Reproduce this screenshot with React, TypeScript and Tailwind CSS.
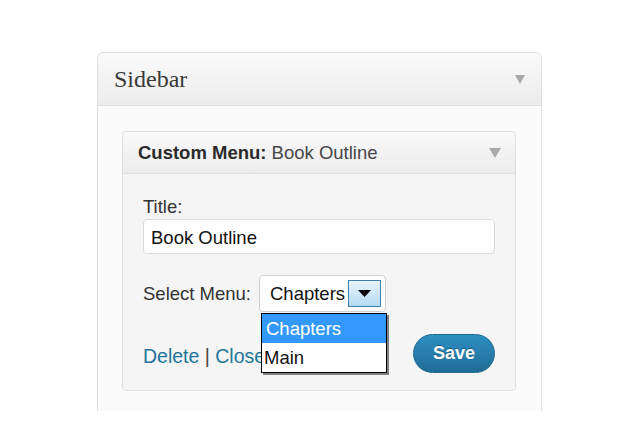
function Tri({ w, h, color }: { w: number; h: number; color: string }) {
  return (
    <svg width={w} height={h} viewBox={`0 0 ${w} ${h}`} className="block">
      <polygon points={`0,0 ${w},0 ${w / 2},${h}`} fill={color} />
    </svg>
  );
}

export default function App() {
  return (
    <div className="min-h-[443px] w-[620px] bg-white pt-[52px] pl-[97px] font-['Liberation_Sans',Arial,sans-serif]">
      <div className="w-[445px]">
        <div className="h-[54px] flex items-center justify-between pl-[16px] pr-[16px] border border-[#dfdfdf] rounded-t-[6px] bg-gradient-to-b from-[#fafafa] to-[#ececec]">
          <span className="font-['Liberation_Serif',serif] text-[24px] leading-[28px] text-[#3a3a3a]">Sidebar</span>
          <Tri w={10} h={9} color="#a9a9a9" />
        </div>
        <div className="h-[305px] border-x border-[#dfdfdf] bg-[#fbfbfb] pt-[25px] pl-[24px]">
          <div className="w-[394px] border border-[#dfdfdf] rounded-[4px]">
            <div className="h-[42px] flex items-center justify-between pl-[15px] pr-[14px] border-b border-[#dfdfdf] rounded-t-[4px] bg-gradient-to-b from-[#f9f9f9] to-[#ececec]">
              <span className="text-[18.5px] leading-[21px] text-[#464646]">
                <span className="font-bold text-[#2a2a2a]">Custom Menu:</span> Book Outline
              </span>
              <Tri w={12} h={10} color="#a9a9a9" />
            </div>
            <div className="bg-[#f5f5f5] rounded-b-[4px] pt-[22px] px-[20px] pb-[17px]">
              <div className="text-[18.5px] leading-[21px] text-[#333]">Title:</div>
              <div className="mt-[2px] h-[35px] w-[352px] border border-[#dcdcdc] rounded-[4px] bg-white flex items-center pl-[7px] pt-[2px] text-[18.5px] leading-[21px] text-[#111]">
                Book Outline
              </div>
              <div className="mt-[21px] flex items-center gap-[8px]">
                <span className="text-[18.5px] leading-[21px] text-[#333]">Select Menu:</span>
                <div className="relative h-[37px] w-[127px] border border-[#cfcfcf] rounded-[4px] bg-white flex items-center justify-between pl-[10px] pr-[4px]">
                  <span className="text-[18.5px] leading-[21px] text-[#111]">Chapters</span>
                  <div className="h-[27px] w-[33px] border border-[#3c7fb1] bg-gradient-to-b from-[#e8f4fc] to-[#b4daf4] flex items-center justify-center">
                    <Tri w={13} h={7} color="#000" />
                  </div>
                  <div className="absolute left-[1px] top-[37px] w-[126px] border border-black bg-white shadow-[2px_2px_0_#808080] z-10">
                    <div className="h-[29px] bg-[#3399ff] text-white text-[18.5px] leading-[29px] pl-[4px]">Chapters</div>
                    <div className="h-[29px] text-[#111] text-[18.5px] leading-[29px] pl-[2px]">Main</div>
                  </div>
                </div>
              </div>
              <div className="mt-[22px] flex items-center justify-between">
                <span className="text-[19.5px] leading-[22px] pt-[4px]">
                  <span className="text-[#21759b]">Delete</span>
                  <span className="text-[#444]"> | </span>
                  <span className="text-[#21759b]">Close</span>
                </span>
                <div className="h-[39px] w-[82px] rounded-full border border-[#1f6a8f] bg-gradient-to-b from-[#2e8fc3] to-[#1f6c95] flex items-center justify-center text-white font-bold text-[18px] leading-[21px] [text-shadow:0_-1px_0_rgba(0,0,0,0.3)]">
                  Save
                </div>
              </div>
            </div>
          </div>
        </div>
      </div>
    </div>
  );
}
